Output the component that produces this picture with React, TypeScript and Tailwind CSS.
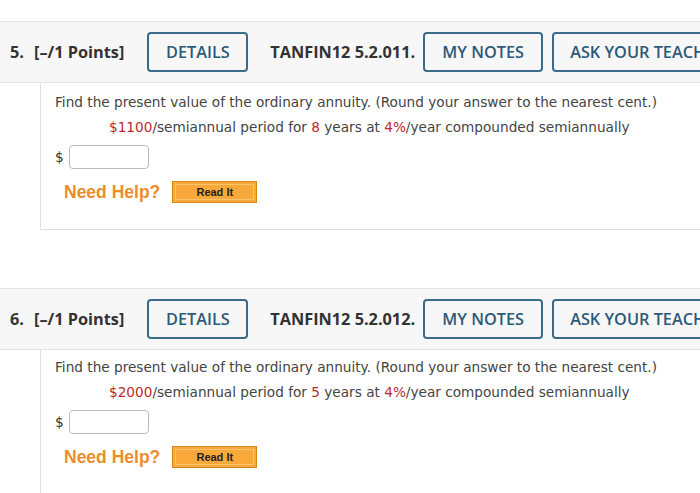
import React from "react";

const Header = ({ num, code }: { num: string; code: string }) => {
  return (
    <div className="flex items-center h-[62px] bg-[#f7f7f7] border-t border-b border-[#e3e3e3] whitespace-nowrap overflow-hidden font-['Open_Sans',sans-serif] text-[16.3px] text-[#333]">
      <span className="ml-[10px] font-bold w-[24px] shrink-0">{num}</span>
      <span className="font-bold shrink-0">[–/1 Points]</span>
      <div className="ml-[23px] w-[101px] h-[40px] shrink-0 flex items-center justify-center border-2 border-[#3b6b89] rounded-[4px] text-[#2c5a79] font-semibold">DETAILS</div>
      <span className="ml-[22px] font-bold shrink-0">{code}</span>
      <div className="ml-[8px] w-[120px] h-[40px] shrink-0 flex items-center justify-center border-2 border-[#3b6b89] rounded-[4px] text-[#2c5a79] font-semibold">MY NOTES</div>
      <div className="ml-[9px] w-[170px] h-[40px] shrink-0 flex items-center pl-[16px] border-2 border-[#3b6b89] rounded-[4px] text-[#2c5a79] font-semibold">ASK YOUR TEACHER</div>
    </div>
  );
};

const Question = ({ amount, years, last }: { amount: string; years: string; last?: boolean }) => {
  return (
    <div className={"ml-[40px] border-l border-[#e0e0e0] pl-[14px] font-['DejaVu_Sans',sans-serif] text-[13.65px] text-[#444] " + (last ? "pt-[8px] pb-[30px]" : "pt-[10px] border-b pb-[24px]")}>
      <p className="leading-[18px]">Find the present value of the ordinary annuity. (Round your answer to the nearest cent.)</p>
      <p className="leading-[18px] mt-[7px] ml-[54px]">
        <span className="text-[#c0282d]">${amount}</span>/semiannual period for <span className="text-[#c0282d]">{years}</span> years at <span className="text-[#c0282d]">4%</span>/year compounded semiannually
      </p>
      <div className="flex items-center mt-[9px]">
        <span className="w-[14px] text-[#333]">$</span>
        <div className="w-[80px] h-[24px] border border-[#bbb] rounded-[4px] bg-white"></div>
      </div>
      <div className="flex items-center mt-[10px] ml-[9px]">
        <span className="font-['Liberation_Sans',sans-serif] font-bold text-[17.5px] text-[#ec8d2c]">Need Help?</span>
        <div className="ml-[12px] w-[85px] h-[22px] border border-[#d6841c] bg-[#f9a93a] p-[2px]">
          <div className="w-full h-full border border-[#ffc46b] flex items-center justify-center font-['Liberation_Sans',sans-serif] font-bold text-[11px] text-[#222]">Read It</div>
        </div>
      </div>
    </div>
  );
};

export default function App() {
  return (
    <div className="w-[700px] h-[493px] bg-white overflow-hidden pt-[21px]">
      <Header num="5." code="TANFIN12 5.2.011." />
      <Question amount="1100" years="8" />
      <div className="mt-[58px]">
        <Header num="6." code="TANFIN12 5.2.012." />
        <Question amount="2000" years="5" last />
      </div>
    </div>
  );
}
